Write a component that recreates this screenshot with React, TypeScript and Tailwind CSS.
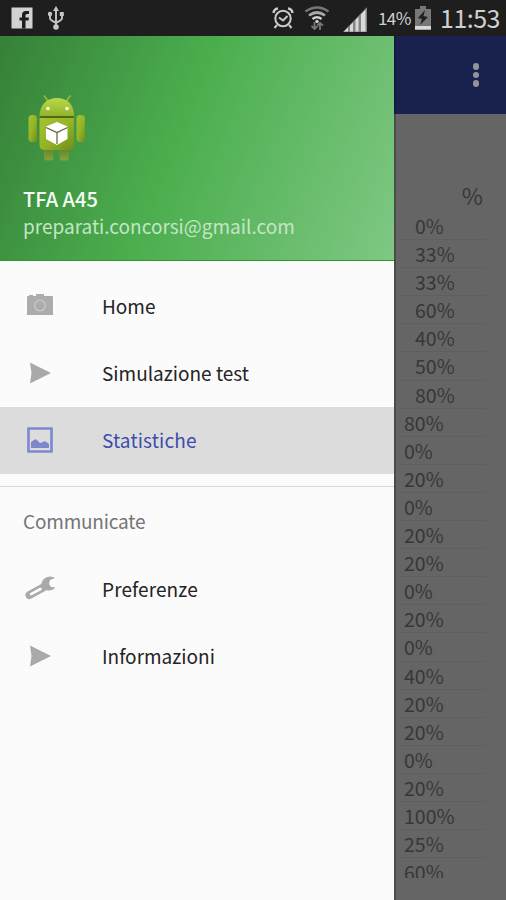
import type { ReactNode } from 'react';

const PERCENTAGES = [
  0, 33, 33, 60, 40, 50, 80, 80, 0, 20, 0, 20, 20, 0, 20, 0, 40, 20, 20, 0, 20, 100, 25, 60,
];
const INDENTED_ROWS = 7;

function StatusBar() {
  return (
    <header className="flex h-9 w-full items-center bg-[#1f1e1f] text-[#d0d0d0]">
      <svg aria-hidden="true" viewBox="0 0 22 22" className="ml-[11px] h-[22px] w-[22px] shrink-0">
        <path fill="#d2d2d2" d="M.500 .500h21v21H.500z" />
        <path fill="#1f1e1f" d="M11 21.500v-8H8.500v-3H11V8q0-4 4-4h3v3h-2q-1.500 0-1.500 1.500v2H18l-.500 3h-3v8z" />
      </svg>
      <svg aria-hidden="true" viewBox="0 0 18 26" className="ml-[14px] h-[26px] w-[18px] shrink-0" fill="none" stroke="#c6c6c6" strokeWidth="1.9">
        <path d="M9 4v18M3 9v4q0 2 2 2.700l4 2.300M15 10v3q0 2-2 2.700L9 18" />
        <path fill="#c6c6c6" stroke="none" d="m9 1 3 5H6zM12.800 7h4v4h-4z" />
        <circle cx="3" cy="9" r="2.200" fill="#c6c6c6" stroke="none" />
        <circle cx="9" cy="22" r="2.800" fill="#c6c6c6" stroke="none" />
      </svg>

      <svg aria-hidden="true" viewBox="0 0 22 22" className="ml-[207px] h-[22px] w-[22px] shrink-0" fill="none" stroke="#cbcbcb" strokeWidth="2">
        <circle cx="11" cy="11.500" r="7.700" />
        <path d="m7 10.500 4 3 4.500-4.500M5 18l-2.500 3M17 18l2.500 3" />
        <path strokeWidth="2.400" d="M1.500 6Q2 2 6 1.500M20.500 6Q20 2 16 1.500" />
      </svg>
      <svg aria-hidden="true" viewBox="0 0 26 25" className="ml-[10px] h-[25px] w-[26px] shrink-0" fill="none">
        <path stroke="#777" strokeWidth="2.600" d="M1.500 5.500q11.500-8 23 0" />
        <path stroke="#a9a9a9" strokeWidth="2.800" d="M5 9.500q8-6 16 0" />
        <path stroke="#d0d0d0" strokeWidth="2.600" d="M8.500 13q4.500-3.500 9 0" />
        <circle cx="13" cy="15.500" r="1.700" fill="#d0d0d0" />
        <path stroke="#777" strokeWidth="1.800" d="M10.500 16v7M7.500 20l3 3 3-3M16 24v-7M13.500 19.500l2.500-2.500 3 2.500" />
      </svg>
      <svg aria-hidden="true" viewBox="0 0 24 25" className="mt-[2px] ml-[13px] h-[25px] w-6 shrink-0">
        <path fill="#858585" d="M0 25 24 0v25z" />
        <path fill="#dadada" d="M1 24.500l4-4v4zM7 18.500l3-3v9H7zM12.500 13l3-3v14.500h-3zM18 7.500l4.500-5v22H18z" />
      </svg>
      <span className="ml-[11px] w-[34px] whitespace-nowrap text-[17px] leading-9 tracking-[-0.6px]">14%</span>
      <svg aria-hidden="true" viewBox="0 0 16 24" className="ml-[3px] h-6 w-4 shrink-0">
        <path fill="#777" d="M5 0h6v3h5v21H0V3h5z" />
        <path fill="#d9d9d9" d="M0 20h16v3.500H0z" />
        <path fill="#202020" d="m10 4-7 8 4 1-2 6 8-8-4.500-1z" />
      </svg>
      <span className="-mt-[3px] ml-[9px] whitespace-nowrap text-[25px] leading-9 tracking-[-0.5px]">11:53</span>
    </header>
  );
}

function Robot() {
  return (
    <svg aria-hidden="true" viewBox="0 0 58 68" className="h-[68px] w-[58px]">
      <defs>
        <linearGradient id="body" x2="1" y2="1">
          <stop stopColor="#a6c12f" />
          <stop offset="0.500" stopColor="#94b526" />
          <stop offset="1" stopColor="#6f8d1c" />
        </linearGradient>
        <linearGradient id="head" x2="0" y2="1">
          <stop stopColor="#b9d94a" />
          <stop offset="1" stopColor="#94b328" />
        </linearGradient>
        <linearGradient id="leg" x2="0" y2="1">
          <stop stopColor="#5f7d22" />
          <stop offset="1" stopColor="#86a33c" />
        </linearGradient>
      </defs>
      <path stroke="#94b53b" strokeWidth="1.800" strokeLinecap="round" d="m20 7-3.500-5M38.500 7 42 2" />
      <rect x="16" y="52" width="9.500" height="14.500" rx="3" fill="url(#leg)" />
      <rect x="31.500" y="52" width="9.500" height="14.500" rx="3" fill="url(#leg)" />
      <rect x="0.500" y="21" width="8.500" height="27" rx="3.500" fill="url(#body)" />
      <rect x="48.500" y="21" width="8.500" height="27" rx="3.500" fill="url(#body)" />
      <path fill="url(#body)" d="M11.500 24h34.500v27q0 5-5 5H16.500q-5 0-5-5z" />
      <path fill="url(#head)" d="M11.500 22C12 10 19 4 29 4s17 6 17 18z" />
      <path stroke="#4d6b17" strokeWidth="1.800" d="M12.500 23h33" />
      <circle cx="20" cy="14.500" r="1.800" fill="#f6fbe7" />
      <circle cx="39" cy="14.500" r="1.800" fill="#f6fbe7" />
      <path fill="#fff" d="m29 28 10.500 4.500V45L29 51l-11-6V32.500z" />
      <path fill="none" stroke="#59613b" strokeWidth="1.200" d="m18 33.500 11 5 10.500-5M29 38.500V50" />
    </svg>
  );
}

function CameraIcon() {
  return (
    <svg aria-hidden="true" viewBox="0 0 26 21" className="-mt-[2px] h-[21px] w-[26px]">
      <path fill="#acacac" d="M0 3q0-1 1-1h1V1h4v1h3V0h8v2h8q1 0 1 1v18H0z" />
      <circle cx="13" cy="11.500" r="5.300" fill="none" stroke="#c8c8c8" strokeWidth="1.300" />
    </svg>
  );
}

function ArrowIcon() {
  return (
    <svg aria-hidden="true" viewBox="0 0 22 22" className="ml-[3px] h-[22px] w-[22px]">
      <path fill="#a9a9a9" d="m0 .500 21 10.500L0 21.500 1.500 11z" />
    </svg>
  );
}

function ImageIcon() {
  return (
    <svg aria-hidden="true" viewBox="0 0 26 26" className="h-[26px] w-[26px]">
      <path fill="none" stroke="#7c88cb" strokeWidth="2.600" d="M1.500 1.500h23v23h-23z" />
      <path fill="#7c88cb" d="M4 21v-6l3-2q2-2 4 1l2 2 3-1 2-1 4 3v4z" />
    </svg>
  );
}

function WrenchIcon() {
  return (
    <svg aria-hidden="true" viewBox="0 0 31 24" className="-mt-[2px] -ml-[2px] h-6 w-[31px] shrink-0">
      <path stroke="#a9a9a9" strokeWidth="8" strokeLinecap="round" d="M4.500 19 20 10.500" />
      <path fill="#a9a9a9" d="M16 9q1-8 9-8.500 3.500 0 5 1.500l-5 2-1 4 2 3 4.500.500q-3 3.500-8 3z" />
      <path stroke="#fbfbfb" strokeWidth="2.600" strokeLinecap="round" d="M6 18.200 15.500 13" />
    </svg>
  );
}

type MenuItemProps = {
  icon: ReactNode;
  label: string;
  labelClass?: string;
  active?: boolean;
};

function MenuItem({ icon, label, labelClass = '', active = false }: MenuItemProps) {
  return (
    <li
      className={`flex h-[67.4px] items-center pl-[27px] text-[19px] ${
        active ? 'bg-[#dcdcdc] text-[#3c4cad]' : 'text-[#242424]'
      }`}
    >
      <span className="flex w-[75px] shrink-0 items-center">{icon}</span>
      <span className={`whitespace-nowrap leading-7 ${labelClass}`}>{label}</span>
    </li>
  );
}

function Drawer() {
  return (
    <aside className="flex w-[394px] shrink-0 flex-col bg-[#fbfbfb]">
      <div className="flex h-[225px] flex-col border-b border-[#2b982e] bg-linear-[112deg,#368038_0%,#4bae4e_45%,#7fc883_100%] pt-[58px] pl-[23px]">
        <div className="ml-[5px] h-[68px]">
          <Robot />
        </div>
        <p className="mt-[23px] text-[20px] leading-7 font-medium whitespace-nowrap text-[#f4fbf4]">TFA A45</p>
        <p className="-mt-px text-[19px] leading-7 whitespace-nowrap text-[#c3e6c4]">preparati.concorsi@gmail.com</p>
      </div>
      <nav className="pt-[11px]">
        <ul>
          <MenuItem icon={<CameraIcon />} label="Home" />
          <MenuItem icon={<ArrowIcon />} label="Simulazione test" />
          <MenuItem icon={<ImageIcon />} label="Statistiche" labelClass="tracking-[0.15px]" active />
        </ul>
        <div className="mt-[12px] border-t border-[#dadada] pt-[20px] pl-[23px]">
          <h2 className="text-[19px] leading-7 tracking-[-0.2px] text-[#757575]">Communicate</h2>
        </div>
        <ul className="mt-[20px]">
          <MenuItem icon={<WrenchIcon />} label="Preferenze" labelClass="tracking-[0.1px]" />
          <MenuItem icon={<ArrowIcon />} label="Informazioni" />
        </ul>
      </nav>
    </aside>
  );
}

function Results() {
  return (
    <main className="flex min-w-0 flex-1 flex-col border-l-2 border-[#4b4b4b] bg-[#656565] text-[#373737]">
      <div className="-ml-[2px] flex h-[78px] shrink-0 justify-end border-l-2 border-[#141942] bg-[#19214f] pt-[27px] pr-[27px]">
        <div className="flex flex-col gap-[2px]">
          <i className="h-[6.500px] w-[6.500px] rounded-full bg-[#929498]" />
          <i className="h-[6.500px] w-[6.500px] rounded-full bg-[#929498]" />
          <i className="h-[6.500px] w-[6.500px] rounded-full bg-[#929498]" />
        </div>
      </div>
      <div className="mt-[65px] h-[33px] shrink-0 pr-[23px] text-right text-[23px] leading-8">%</div>
      <div className="h-[666px] overflow-hidden">
        {PERCENTAGES.map((value, i) => (
          <div
            key={i}
            className={`mr-[20px] ml-[3px] h-[28.100px] border-b border-[#5f5f5f] text-[19.500px] leading-7 ${
              i < INDENTED_ROWS ? 'pl-[16px]' : 'pl-[5px]'
            }`}
          >
            {value}%
          </div>
        ))}
      </div>
    </main>
  );
}

export default function App() {
  return (
    <div className="flex h-[900px] w-[506px] flex-col overflow-hidden font-['Noto_Sans_CJK_SC','Noto_Sans',sans-serif]">
      <StatusBar />
      <div className="flex min-h-0 flex-1">
        <Drawer />
        <Results />
      </div>
    </div>
  );
}
